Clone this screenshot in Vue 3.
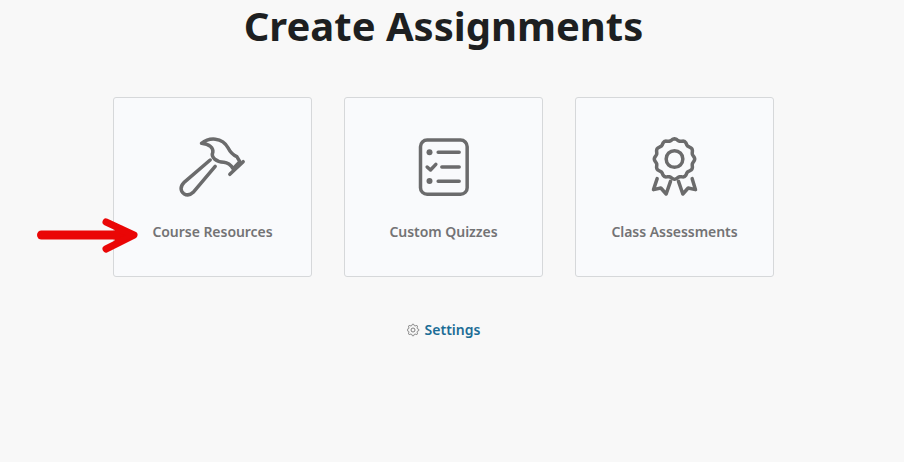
<script setup>
const scallop = (cx, cy, r, amp, lobes) => {
  const pts = []
  const n = lobes * 8
  for (let i = 0; i <= n; i++) {
    const a = (i / n) * Math.PI * 2 - Math.PI / 2
    const rad = r + amp * Math.cos(lobes * a + Math.PI * lobes / 2)
    pts.push(`${(cx + rad * Math.cos(a)).toFixed(2)} ${(cy + rad * Math.sin(a)).toFixed(2)}`)
  }
  return 'M' + pts.join('L') + 'Z'
}
const awardPath = scallop(132, 102, 58, 2.6, 12)
const gearPath = scallop(7, 7, 5.2, 0.8, 8)
const cards = [
  { id: 'hammer', label: 'Course Resources' },
  { id: 'quiz', label: 'Custom Quizzes' },
  { id: 'award', label: 'Class Assessments' },
]
</script>

<template>
  <main class="page">
    <h1 class="title">Create Assignments</h1>
    <div class="cards">
      <a v-for="c in cards" :key="c.id" class="card">
        <svg v-if="c.id === 'hammer'" class="icon" width="100" height="90" viewBox="7.5 0 300 270" fill="none" stroke="#6b6b6c" stroke-width="10.5" stroke-linecap="round" stroke-linejoin="round">
          <path d="M149 120 L70 188 C58 200 60 214 70 221 C80 227 90 225 98 217 L164 139" />
          <path d="M123 70 C145 52 185 50 203 84 C212 102 220 106 229 110 L238 125 L218 146 C210 134 200 128 190 127 C168 126 150 112 157 97 C159 84 148 72 123 70 Z" />
          <path d="M248 125 L208 163" />
        </svg>
        <svg v-else-if="c.id === 'quiz'" class="icon" width="100" height="90" viewBox="-19.5 -15 300 270" fill="none" stroke="#6b6b6c" stroke-width="10.5" stroke-linecap="round" stroke-linejoin="round">
          <rect x="60" y="45" width="140" height="163" rx="20" />
          <circle cx="87" cy="82" r="9" fill="#6b6b6c" stroke="none" />
          <circle cx="87" cy="168" r="9" fill="#6b6b6c" stroke="none" />
          <path d="M80 126 L90 135 L106 118" />
          <path d="M113 82 H176 M124 126 H176 M113 169 H176" />
        </svg>
        <svg v-else class="icon" width="100" height="90" viewBox="-16.5 -15 300 270" fill="none" stroke="#6b6b6c" stroke-width="10.5" stroke-linecap="round" stroke-linejoin="round">
          <path :d="awardPath" />
          <circle cx="132" cy="102" r="25" />
          <path d="M80 161 L69 194 L91 189 L107 207 L120 169" />
          <path d="M185 161 L195 194 L173 189 L157 207 L144 169" />
        </svg>
        <span class="label">{{ c.label }}</span>
      </a>
    </div>
    <a class="settings">
      <svg width="14" height="14" viewBox="1 0 14 14" fill="none" stroke="#707070" stroke-width="0.9" stroke-linejoin="round">
        <path :d="gearPath" />
        <circle cx="7" cy="7" r="2" />
      </svg>
      <span>Settings</span>
    </a>
    <svg class="arrow" width="110" height="40" viewBox="0 0 110 40" fill="none" stroke="#ea0606" stroke-linecap="round" stroke-linejoin="round">
      <path d="M8.5 19 H96" stroke-width="9" />
      <path d="M73 6 L101 19 L73 33" stroke-width="7" />
      <path d="M84 14 L100 19 L84 25 Z" stroke-width="5" fill="#ea0606" />
    </svg>
  </main>
</template>

<style>
html, body { margin: 0; background: #f8f8f8; }
</style>

<style scoped>
.page {
  position: relative;
  width: 887px;
  height: 462px;
  display: flex;
  flex-direction: column;
  align-items: center;
  font-family: "Noto Sans", sans-serif;
}
.title {
  margin: 0;
  font-size: 40px;
  line-height: 52px;
  font-weight: 700;
  color: #1d1f21;
}
.cards {
  display: flex;
  gap: 32px;
  margin-top: 45px;
}
.card {
  box-sizing: border-box;
  width: 199px;
  height: 180px;
  padding-top: 22px;
  background: #f9fafc;
  border: 1px solid #d6d8da;
  border-radius: 3px;
  display: flex;
  flex-direction: column;
  align-items: center;
}
.icon { display: block; }
.label {
  font-size: 14px;
  font-weight: 600;
  line-height: 20px;
  letter-spacing: -0.04px;
  color: #737375;
  margin-top: 12px;
}
.settings {
  display: flex;
  align-items: center;
  gap: 4px;
  margin-top: 43px;
  font-size: 14px;
  font-weight: 600;
  line-height: 20px;
  color: #1c6d96;
}
.arrow {
  position: absolute;
  left: 33px;
  top: 216px;
}
</style>
